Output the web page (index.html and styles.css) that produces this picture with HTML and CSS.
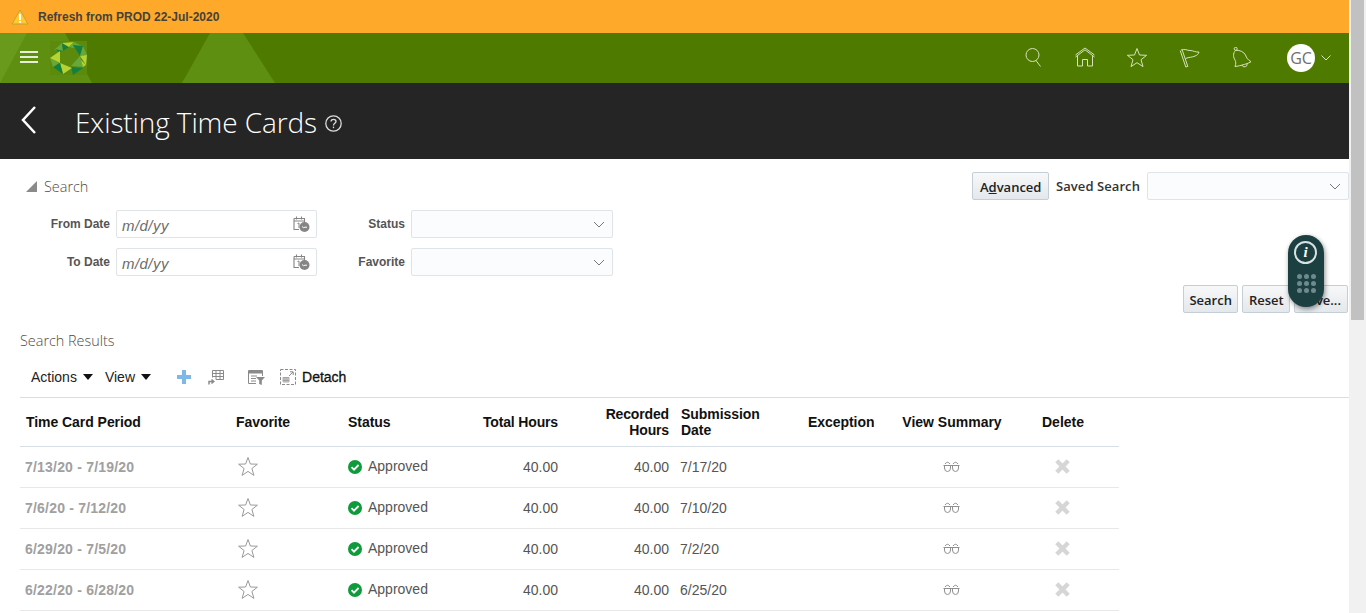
FILE: index.html
```html
<!DOCTYPE html>
<html>

<head>
    <title>Existing Time Cards</title>

    <!-- For styling -->
    <link rel="stylesheet" href="styles.css">
</head>

<body>
    <!-- Shared icons -->
    <svg class="defs" width="0" height="0">
        <defs>
            <g id="chev"><path d="M1 1 L6 6 L11 1"/></g>
            <g id="cal">
                <path d="M3.5 0.5 V3.5 M8.5 0.5 V3.5 M1 2.5 H11.5 V7 M1 2.5 V13.5 H6 M1 5 H11.5" fill="none" stroke="#858585" stroke-width="1.1"/>
                <path d="M4.5 7.5 L6 7 V12" fill="none" stroke="#858585"/>
                <circle cx="11.5" cy="11" r="5" fill="#858585"/>
                <path d="M9 10.5 Q10.5 12.5 12 11.2 L14 11.2" fill="none" stroke="#fff"/>
            </g>
            <g id="star"><path d="M11 1.5 L13.4 8 L20.4 8.2 L14.9 12.5 L16.9 19.4 L11 15.4 L5.1 19.4 L7.1 12.5 L1.6 8.2 L8.6 8 Z" fill="none" stroke="#9a9a9a"/></g>
            <g id="check">
                <circle cx="7" cy="7" r="7" fill="#0f9a3c"/>
                <path d="M3.5 7.2 L6 9.7 L10.6 5" fill="none" stroke="#fff" stroke-width="1.8"/>
            </g>
            <g id="glasses" fill="none" stroke="#8f8f8f">
                <path d="M0.5 4.5 H16.5 M1.5 4.5 V7 Q1.5 10.5 4.5 10.5 Q7.5 10.5 7.5 7 V4.5 M9.5 4.5 V7 Q9.5 10.5 12.5 10.5 Q15.5 10.5 15.5 7 V4.5"/>
                <path d="M2 3 Q4.5 -0.5 7 3 M10 3 Q12.5 -0.5 15 3"/>
            </g>
            <g id="cross"><path d="M2.8 2.8 L14.2 14.2 M14.2 2.8 L2.8 14.2" stroke="#d6d6d6" stroke-width="4.4"/></g>
        </defs>
    </svg>

    <div class="app">
        <div class="page">

            <!-- Environment banner -->
            <div class="banner">
                <svg class="banner-icon" width="18" height="16" viewBox="0 0 18 16">
                    <path d="M9 1 L17 15 L1 15 Z" fill="#ffc933" stroke="#c9a227" stroke-width="1" stroke-linejoin="round"/>
                    <rect x="8" y="5" width="2" height="6" fill="#fff"/>
                    <rect x="8" y="12" width="2" height="2" fill="#fff"/>
                </svg>
                <span>Refresh from PROD 22-Jul-2020</span>
            </div>

            <!-- Global header -->
            <div class="header">
                <svg class="header-bg" width="300" height="50" viewBox="0 0 300 50">
                    <polygon points="0,0 65,0 92,50 0,50" fill="#5f8f10"/>
                    <polygon points="0,0 27,0 0,50" fill="#6a9a1c"/>
                    <polygon points="210,0 243,0 275,50 182,50" fill="#5f8f10"/>
                </svg>
                <div class="header-left">
                    <div class="burger"><i></i><i></i><i></i></div>
                    <svg class="logo" width="37" height="34" viewBox="0 0 37 34">
                        <rect width="37" height="34" fill="#5c8a0c"/>
                        <polygon points="4,9 12,2 13,10" fill="#67a83a"/>
                        <polygon points="5,8 13,10 9,11" fill="#138040"/>
                        <polygon points="12,2 19,6 13,10" fill="#138040"/>
                        <polygon points="12,2 24,1 19,6" fill="#b5d433"/>
                        <polygon points="24,1 32,5 23,7" fill="#67a83a"/>
                        <polygon points="19,6 24,1 23,7" fill="#67a83a"/>
                        <polygon points="23,4 33,5 30,15" fill="#138040"/>
                        <polygon points="33,5 37,14 30,15" fill="#67a83a"/>
                        <polygon points="37,14 36,24 30,15" fill="#b5d433"/>
                        <polygon points="30,15 33,26 21,25" fill="#67a83a"/>
                        <polygon points="36,24 33,26 31,19" fill="#b5d433"/>
                        <polygon points="21,26 33,27 23,34" fill="#138040"/>
                        <polygon points="10,22 22,27 13,33" fill="#b5d433"/>
                        <polygon points="10,22 13,33 3,26" fill="#138040"/>
                        <polygon points="0,17 9,22 3,26" fill="#67a83a"/>
                        <polygon points="0,17 10,10 10,22" fill="#b5d433"/>
                    </svg>
                </div>
                <div class="header-right">
                    <svg class="nav-icon" width="22" height="22" viewBox="0 0 22 22">
                        <circle cx="10.5" cy="8" r="6.5"/>
                        <path d="M14 13.5 L18.5 19.5"/>
                    </svg>
                    <svg class="nav-icon" width="22" height="22" viewBox="0 0 22 22">
                        <path d="M1.5 8 L11 1 L20.5 8"/>
                        <path d="M1.5 10 L11 2.8 L20.5 10"/>
                        <path d="M3.5 9 V19 H8.5 V12.5 H13.5 V19 H18.5 V9"/>
                    </svg>
                    <svg class="nav-icon" width="22" height="22" viewBox="0 0 22 22">
                        <path d="M11 1.5 L13.5 8 L20.6 8.3 L15 12.7 L17 19.6 L11 15.7 L5 19.6 L7 12.7 L1.4 8.3 L8.5 8 Z"/>
                    </svg>
                    <svg class="nav-icon" width="22" height="22" viewBox="0 0 22 22">
                        <path d="M3 3 C7 1.5 9 3.5 12 3.5 C15 3.5 18 5.5 21 5 C20.5 7 19 8.5 17 9 C14 10.5 11 10 7.5 11.5"/>
                        <path d="M2.2 3.6 L7.8 20 L9.8 19.4 L4.2 3"/>
                    </svg>
                    <svg class="nav-icon" width="22" height="22" viewBox="0 0 22 22">
                        <circle cx="5.7" cy="1.8" r="1.5"/>
                        <path d="M5.7 3.3 C10 3 14 5 15.5 8 C16.5 11 18 13 21 14.7 C20 16 10 19 5 19.5 C6 17 6 15 5 13 C3.5 11 2.5 6 5.7 3.3 Z"/>
                        <path d="M12 18 A2.5 2.5 0 0 0 17 16.5"/>
                    </svg>
                    <div class="user">
                        <div class="avatar">GC</div>
                        <svg class="nav-icon" width="10" height="6" viewBox="0 0 10 6"><path d="M0.5 0.5 L5 5 L9.5 0.5"/></svg>
                    </div>
                </div>
            </div>

            <!-- Page title -->
            <div class="titlebar">
                <svg class="back" width="18" height="30" viewBox="0 0 18 30"><path d="M15 2 L3 15 L15 28"/></svg>
                <h1>Existing Time Cards</h1>
                <svg class="help" width="17" height="17" viewBox="0 0 17 17">
                    <circle cx="8.5" cy="8.5" r="7.7"/>
                    <path d="M6 6.5 C6 3.6 11 3.6 11 6.5 C11 8.4 8.5 8.2 8.5 10.4"/>
                    <path d="M8.5 11.6 V13.2"/>
                </svg>
            </div>

            <!-- Search panel -->
            <div class="search">
                <div class="search-top">
                    <div class="disclosure"><span class="tri"></span>Search</div>
                    <div class="saved">
                        <button class="btn btn-wide">A<u>d</u>vanced</button>
                        <span class="saved-label">Saved Search</span>
                        <div class="field select saved-select">
                            <svg class="chev" width="12" height="7" viewBox="0 0 12 7"><use href="#chev"/></svg>
                        </div>
                    </div>
                </div>

                <div class="search-form">
                    <label>From Date</label>
                    <div class="field date"><em>m/d/yy</em>
                        <svg class="cal" width="17" height="17" viewBox="0 0 17 17"><use href="#cal"/></svg>
                    </div>
                    <label>Status</label>
                    <div class="field select">
                        <svg class="chev" width="12" height="7" viewBox="0 0 12 7"><use href="#chev"/></svg>
                    </div>

                    <label>To Date</label>
                    <div class="field date"><em>m/d/yy</em>
                        <svg class="cal" width="17" height="17" viewBox="0 0 17 17"><use href="#cal"/></svg>
                    </div>
                    <label>Favorite</label>
                    <div class="field select">
                        <svg class="chev" width="12" height="7" viewBox="0 0 12 7"><use href="#chev"/></svg>
                    </div>
                </div>

                <div class="search-actions">
                    <button class="btn btn-tight">Search</button>
                    <button class="btn btn-tight">Reset</button>
                    <button class="btn">Save...</button>
                </div>
            </div>

            <!-- Results -->
            <div class="results">
                <div class="results-title">Search Results</div>
                <div class="toolbar">
                    <span class="menu">Actions<i class="caret"></i></span>
                    <span class="menu">View<i class="caret"></i></span>
                    <svg class="tool-add" width="14" height="14" viewBox="0 0 14 14">
                        <path d="M5 0 H9 V5 H14 V9 H9 V14 H5 V9 H0 V5 H5 Z" fill="#7db8e8"/>
                    </svg>
                    <svg class="tool-cols" width="16" height="16" viewBox="0 0 16 16" fill="none" stroke="#8a8a8a">
                        <path d="M4.5 8.5 V1.5 H15.5 V10.5 H8 M4.5 4.5 H15.5 M4.5 7.5 H15.5 M8 1.5 V10.5 M12 1.5 V10.5"/>
                        <path d="M1 15.5 V12.5 H5 M3.5 10.5 L5.8 12.5 L3.5 14.5" stroke-width="1.5"/>
                    </svg>
                    <svg class="tool-filter" width="17" height="15" viewBox="0 0 17 15">
                        <path d="M0.5 0.5 H14.5 V6 M0.5 0.5 V13.5 H8" fill="none" stroke="#8a8a8a"/>
                        <rect x="1" y="1" width="13" height="2.5" fill="#8a8a8a"/>
                        <path d="M3 6 H9 M3 8.5 H8 M3 11 H8" stroke="#8a8a8a"/>
                        <path d="M8 7 H17 L13.8 10.5 V15 L11.2 14 V10.5 Z" fill="#8a8a8a"/>
                    </svg>
                    <svg class="tool-detach" width="16" height="16" viewBox="0 0 16 16" fill="none" stroke="#8a8a8a">
                        <path d="M0.5 0.5 H15.5 V15.5 H0.5 Z" stroke-dasharray="3 1.5"/>
                        <path d="M9 7 L13 3 M10 2.8 H13.2 V6"/>
                        <path d="M3 8.5 H9 V13 H3 Z M3 10 H9 M3 11.5 H9 M5 8.5 V13 M7 8.5 V13" stroke-width="0.7"/>
                    </svg>
                    <span class="detach">Detach</span>
                </div>

                <table class="cards">
                    <colgroup>
                        <col class="c-period"><col class="c-fav"><col class="c-status"><col class="c-total"><col class="c-rec">
                        <col class="c-sub"><col class="c-exc"><col class="c-view"><col class="c-del">
                    </colgroup>
                    <thead>
                        <tr>
                            <th>Time Card Period</th>
                            <th>Favorite</th>
                            <th>Status</th>
                            <th class="num">Total Hours</th>
                            <th class="num">Recorded<br>Hours</th>
                            <th>Submission<br>Date</th>
                            <th>Exception</th>
                            <th class="mid">View Summary</th>
                            <th class="mid">Delete</th>
                        </tr>
                    </thead>
                    <tbody>
                        <tr>
                            <td class="period">7/13/20 - 7/19/20</td>
                            <td class="fav"><svg width="22" height="21" viewBox="0 0 22 21"><use href="#star"/></svg></td>
                            <td class="state"><svg class="check" width="14" height="14" viewBox="0 0 14 14"><use href="#check"/></svg>Approved</td>
                            <td class="num">40.00</td>
                            <td class="num">40.00</td>
                            <td>7/17/20</td>
                            <td></td>
                            <td class="mid view"><svg width="17" height="11" viewBox="0 0 17 11"><use href="#glasses"/></svg></td>
                            <td class="mid del"><svg width="17" height="17" viewBox="0 0 17 17"><use href="#cross"/></svg></td>
                        </tr>
                        <tr>
                            <td class="period">7/6/20 - 7/12/20</td>
                            <td class="fav"><svg width="22" height="21" viewBox="0 0 22 21"><use href="#star"/></svg></td>
                            <td class="state"><svg class="check" width="14" height="14" viewBox="0 0 14 14"><use href="#check"/></svg>Approved</td>
                            <td class="num">40.00</td>
                            <td class="num">40.00</td>
                            <td>7/10/20</td>
                            <td></td>
                            <td class="mid view"><svg width="17" height="11" viewBox="0 0 17 11"><use href="#glasses"/></svg></td>
                            <td class="mid del"><svg width="17" height="17" viewBox="0 0 17 17"><use href="#cross"/></svg></td>
                        </tr>
                        <tr>
                            <td class="period">6/29/20 - 7/5/20</td>
                            <td class="fav"><svg width="22" height="21" viewBox="0 0 22 21"><use href="#star"/></svg></td>
                            <td class="state"><svg class="check" width="14" height="14" viewBox="0 0 14 14"><use href="#check"/></svg>Approved</td>
                            <td class="num">40.00</td>
                            <td class="num">40.00</td>
                            <td>7/2/20</td>
                            <td></td>
                            <td class="mid view"><svg width="17" height="11" viewBox="0 0 17 11"><use href="#glasses"/></svg></td>
                            <td class="mid del"><svg width="17" height="17" viewBox="0 0 17 17"><use href="#cross"/></svg></td>
                        </tr>
                        <tr>
                            <td class="period">6/22/20 - 6/28/20</td>
                            <td class="fav"><svg width="22" height="21" viewBox="0 0 22 21"><use href="#star"/></svg></td>
                            <td class="state"><svg class="check" width="14" height="14" viewBox="0 0 14 14"><use href="#check"/></svg>Approved</td>
                            <td class="num">40.00</td>
                            <td class="num">40.00</td>
                            <td>6/25/20</td>
                            <td></td>
                            <td class="mid view"><svg width="17" height="11" viewBox="0 0 17 11"><use href="#glasses"/></svg></td>
                            <td class="mid del"><svg width="17" height="17" viewBox="0 0 17 17"><use href="#cross"/></svg></td>
                        </tr>
                    </tbody>
                </table>
            </div>
        </div>

        <div class="scrollbar"><div class="thumb"></div></div>
    </div>

    <!-- Floating help widget -->
    <div class="widget">
        <div class="widget-info">i</div>
        <div class="widget-dots">
            <i></i><i></i><i></i><i></i><i></i><i></i><i></i><i></i><i></i>
        </div>
    </div>
</body>

</html>
```

FILE: styles.css
```css
html,
body {
    margin: 0;
    height: 613px;
    overflow: hidden;
    background: white;
    font-family: "Liberation Sans", Arial, sans-serif;
}

.defs {
    position: absolute;
}

.app {
    display: flex;
    height: 613px;
    overflow: hidden;
}

.page {
    flex: 1;
    min-width: 0;
}

.scrollbar {
    width: 17px;
    background: #f1f1f1;
    flex: none;
}

.thumb {
    height: 320px;
    margin-left: 2px;
    width: 13px;
    background: #c1c1c1;
}

/* banner */
.banner {
    height: 33px;
    background: #ffa92b;
    display: flex;
    align-items: center;
    padding-left: 11px;
    gap: 9px;
    font-size: 12px;
    font-weight: bold;
    color: #44423a;
}

/* header */
.header {
    position: relative;
    height: 50px;
    background: #4f7a00;
    display: flex;
    align-items: center;
    justify-content: space-between;
}

.header-bg {
    position: absolute;
    left: 0;
    top: 0;
}

.header-left {
    position: relative;
    display: flex;
    align-items: center;
    padding-left: 20px;
}

.burger {
    width: 18px;
    margin-right: 12px;
}

.burger i {
    display: block;
    height: 2px;
    background: #e6eed6;
    margin-bottom: 3px;
}

.header-right {
    display: flex;
    align-items: center;
    padding-right: 18px;
}

.nav-icon {
    fill: none;
    stroke: #d5e2bd;
    stroke-width: 1;
    margin-right: 30px;
}

.user {
    display: flex;
    align-items: center;
    gap: 6px;
    margin-left: 5px;
}

.user .nav-icon {
    margin-right: 0;
}

.avatar {
    width: 28px;
    height: 28px;
    border-radius: 50%;
    background: white;
    color: #6f6f6f;
    font-family: "Open Sans", sans-serif;
    font-size: 16px;
    line-height: 28px;
    text-align: center;
}

/* title */
.titlebar {
    height: 76px;
    background: #252525;
    display: flex;
    align-items: center;
    padding-left: 20px;
}

.back {
    fill: none;
    stroke: white;
    stroke-width: 2.5;
    margin-right: 37px;
    margin-top: -2px;
}

.titlebar h1 {
    margin: 2px 0 0;
    font-family: "Open Sans", sans-serif;
    font-size: 28px;
    font-weight: 300;
    letter-spacing: -0.11px;
    color: white;
}

.help {
    fill: none;
    stroke: #dcdcdc;
    stroke-width: 1.3;
    margin-left: 8px;
    margin-top: 4px;
}

/* search */
.search {
    padding: 13px 1px 0 20px;
}

.search-top {
    display: flex;
    justify-content: space-between;
    align-items: center;
    height: 28px;
    margin-right: -1px;
}

.disclosure {
    font-family: "Open Sans", sans-serif;
    font-size: 14.4px;
    font-weight: 300;
    color: #4a4a4a;
    display: flex;
    align-items: center;
    padding-left: 6px;
}

.tri {
    width: 0;
    height: 0;
    border-left: 11px solid transparent;
    border-bottom: 11px solid #8a8a8a;
    margin-right: 7px;
}

.saved {
    display: flex;
    align-items: center;
}

.saved-label {
    font-family: "Open Sans", sans-serif;
    font-size: 13px;
    font-weight: 600;
    letter-spacing: 0.08px;
    color: #333;
    margin: 0 7px;
}

.btn {
    height: 28px;
    padding: 2px 6px 0;
    border: 1px solid #c4ced7;
    border-radius: 2px;
    background: linear-gradient(#f7f8f9, #e4e8ec);
    font-family: "Open Sans", sans-serif;
    font-size: 13px;
    font-weight: 600;
    color: #222;
}

.btn-wide {
    padding: 2px 6.5px 0;
}

.btn-tight {
    padding: 2px 5.5px 0;
}

.field {
    box-sizing: border-box;
    height: 28px;
    border: 1px solid #dfe4e8;
    border-radius: 2px;
    background: #fbfcfd;
    display: flex;
    align-items: center;
    justify-content: flex-end;
    position: relative;
}

.chev {
    fill: none;
    stroke: #777;
    stroke-width: 1;
    margin-right: 7px;
}

.saved-select {
    width: 202px;
}

.search-form {
    display: grid;
    grid-template-columns: 90px 201px 82px 202px;
    grid-auto-rows: 28px;
    row-gap: 10px;
    column-gap: 6px;
    margin-top: 10px;
    align-items: center;
}

.search-form label {
    text-align: right;
    font-size: 12px;
    font-weight: bold;
    color: #555;
}

.date {
    justify-content: space-between;
    background: white;
}

.date em {
    font-size: 15px;
    letter-spacing: 0.45px;
    color: #6c6c6c;
    padding: 2px 0 0 5px;
}

.cal {
    margin-right: 6px;
}

.search-actions {
    display: flex;
    justify-content: flex-end;
    gap: 4px;
    margin-top: 9px;
}

/* results */
.results {
    padding-left: 20px;
}

.results-title {
    margin-top: 18px;
    font-family: "Open Sans", sans-serif;
    font-size: 14.4px;
    font-weight: 300;
    color: #4a4a4a;
}

.toolbar {
    display: flex;
    align-items: center;
    height: 40px;
    padding: 7px 0 0 11px;
    border-bottom: 1px solid #d6dfe6;
    font-size: 14px;
    color: #222;
}

.menu {
    margin-right: 12px;
    display: flex;
    align-items: center;
}

.caret {
    width: 0;
    height: 0;
    border-left: 5px solid transparent;
    border-right: 5px solid transparent;
    border-top: 6px solid #111;
    margin-left: 6px;
}

.tool-add {
    margin-left: 14px;
}

.tool-cols {
    margin-left: 17px;
}

.tool-filter {
    margin-left: 24px;
}

.tool-detach {
    margin-left: 15px;
}

.detach {
    margin-left: 6px;
    color: #111;
    -webkit-text-stroke: 0.3px #111;
}

.cards {
    border-collapse: collapse;
    table-layout: fixed;
    width: 1099px;
    font-size: 14px;
}

.c-period { width: 210px; }
.c-fav { width: 112px; }
.c-status { width: 108px; }
.c-total { width: 114px; }
.c-rec { width: 111px; }
.c-sub { width: 127px; }
.c-exc { width: 95px; }
.c-view { width: 110px; }
.c-del { width: 112px; }

.cards th {
    height: 48px;
    padding: 0 6px;
    text-align: left;
    font-weight: bold;
    line-height: 16px;
    letter-spacing: -0.05px;
    color: #111;
    border-bottom: 1px solid #d6dfe6;
}

.cards td {
    height: 40px;
    padding: 0 6px 0 5px;
    color: #555;
    border-bottom: 1px solid #e8e8e8;
}

.cards th.num {
    letter-spacing: -0.15px;
}

.cards th.mid {
    letter-spacing: 0;
}

.cards .num {
    text-align: right;
    padding-right: 6px;
}

.cards .mid {
    text-align: center;
    padding: 0;
}

.cards .view {
    height: 36px;
    padding: 0 2px 4px 0;
}

.cards .del {
    height: 38px;
    padding: 0 2px 2px 0;
}

.cards svg {
    vertical-align: middle;
}

.cards .period {
    font-weight: bold;
    letter-spacing: 0.2px;
    color: #a0a0a0;
}

.cards .fav {
    height: 38px;
    padding: 0 0 2px 7px;
}

.cards .state {
    height: 38px;
    padding: 0 0 2px 6px;
}

.check {
    margin-right: 6px;
}

/* widget */
.widget {
    position: absolute;
    left: 1288px;
    top: 235px;
    width: 36px;
    height: 72px;
    border-radius: 18px;
    background: #1c3f42;
    box-shadow: 1px 2px 5px rgba(0, 0, 0, 0.45);
}

.widget-info {
    box-sizing: border-box;
    width: 23px;
    height: 23px;
    margin: 6px 0 0 6px;
    border: 2px solid #d8e2e2;
    border-radius: 50%;
    color: white;
    font-family: "Liberation Serif", serif;
    font-style: italic;
    font-weight: bold;
    font-size: 15px;
    line-height: 19px;
    text-align: center;
}

.widget-dots {
    display: grid;
    grid-template-columns: repeat(3, 5px);
    gap: 2px;
    justify-content: center;
    margin-top: 10px;
}

.widget-dots i {
    width: 5px;
    height: 5px;
    border-radius: 50%;
    background: #6f8a8c;
}
```
